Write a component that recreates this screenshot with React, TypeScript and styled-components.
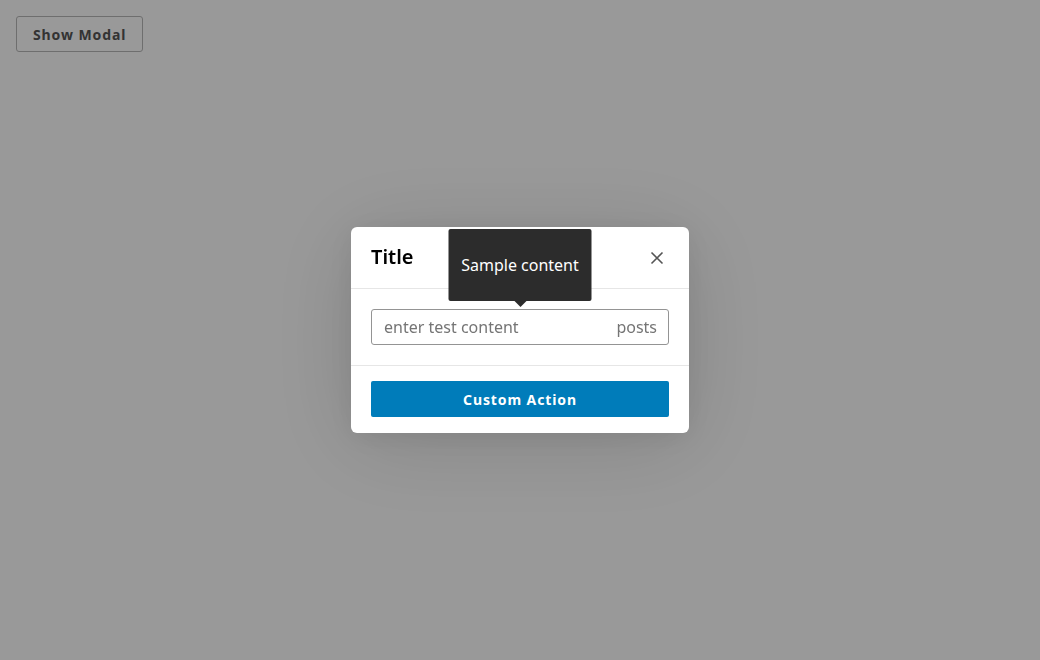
import styled, { createGlobalStyle } from 'styled-components';

const GlobalStyle = createGlobalStyle`
  html, body {
    margin: 0;
    padding: 0;
    background: #fff;
    font-family: "Noto Sans", "Open Sans", sans-serif;
  }
  * { box-sizing: border-box; }
`;

const Page = styled.div`
  width: 1040px;
  height: 660px;
  padding: 16px;
  position: relative;
  overflow: hidden;
`;

const OutlineButton = styled.button`
  height: 36px;
  padding: 0 16px;
  border: 1px solid #b8b8b8;
  border-radius: 3px;
  background: #fff;
  color: #555;
  font-family: inherit;
  font-size: 14px;
  font-weight: 700;
  letter-spacing: 0.9px;
`;

const Overlay = styled.div`
  position: fixed;
  inset: 0;
  background: rgba(0, 0, 0, 0.4);
  display: flex;
  align-items: center;
  justify-content: center;
`;

const Modal = styled.div`
  width: 338px;
  background: #fff;
  border-radius: 6px;
  box-shadow: 0 10px 90px rgba(0, 0, 0, 0.14), 0 4px 30px rgba(0, 0, 0, 0.08);
`;

const Header = styled.div`
  height: 62px;
  padding: 0 20px;
  display: flex;
  align-items: center;
  justify-content: space-between;
  border-bottom: 1px solid #e6e6e6;
`;

const Title = styled.h1`
  margin: 0;
  font-size: 20px;
  font-weight: 600;
  color: #000;
  padding-bottom: 2px;
`;

const CloseButton = styled.button`
  width: 24px;
  height: 24px;
  padding: 0;
  border: 0;
  background: none;
  display: flex;
  align-items: center;
  justify-content: center;
  color: #555;
`;

const Section = styled.div<{ $top: number; $bottom: number; $divider?: boolean }>`
  padding: ${(p) => p.$top}px 20px ${(p) => p.$bottom}px;
  border-bottom: ${(p) => (p.$divider ? '1px solid #e6e6e6' : 'none')};
`;

const InputWrap = styled.div`
  position: relative;
  height: 36px;
  display: flex;
  align-items: center;
  border: 1px solid #949494;
  border-radius: 3px;
  padding: 0 11px 0 12px;
`;

const Input = styled.input`
  flex: 1;
  min-width: 0;
  border: 0;
  outline: none;
  padding: 0;
  font-family: inherit;
  font-size: 16px;
  color: #1e1e1e;
  &::placeholder {
    color: #757575;
  }
`;

const Suffix = styled.span`
  font-size: 16px;
  color: #757575;
`;

const Tooltip = styled.div`
  position: absolute;
  left: 50%;
  bottom: 43px;
  transform: translateX(-50%);
  width: 143px;
  height: 72px;
  background: #2c2c2c;
  color: #fff;
  border-radius: 2px;
  display: flex;
  align-items: center;
  justify-content: center;
  font-size: 16px;
  white-space: nowrap;

  &::after {
    content: '';
    position: absolute;
    left: 50%;
    top: 100%;
    transform: translateX(-50%);
    border: 6px solid transparent;
    border-top-color: #2c2c2c;
    border-bottom: 0;
  }
`;

const PrimaryButton = styled.button`
  width: 100%;
  height: 36px;
  border: 0;
  border-radius: 2px;
  background: #007cba;
  color: #fff;
  font-family: inherit;
  font-size: 14px;
  font-weight: 700;
  letter-spacing: 0.9px;
`;

export default function App() {
  return (
    <>
      <GlobalStyle />
      <Page>
        <OutlineButton>Show Modal</OutlineButton>
        <Overlay>
          <Modal>
            <Header>
              <Title>Title</Title>
              <CloseButton aria-label="Close">
                <svg width="24" height="24" viewBox="0 0 24 24" fill="none" stroke="currentColor" strokeWidth="1.6">
                  <path d="M6.5 6.5l11 11M17.5 6.5l-11 11" />
                </svg>
              </CloseButton>
            </Header>
            <Section $top={20} $bottom={20} $divider>
              <InputWrap>
                <Tooltip>Sample content</Tooltip>
                <Input placeholder="enter test content" />
                <Suffix>posts</Suffix>
              </InputWrap>
            </Section>
            <Section $top={15} $bottom={16}>
              <PrimaryButton>Custom Action</PrimaryButton>
            </Section>
          </Modal>
        </Overlay>
      </Page>
    </>
  );
}
